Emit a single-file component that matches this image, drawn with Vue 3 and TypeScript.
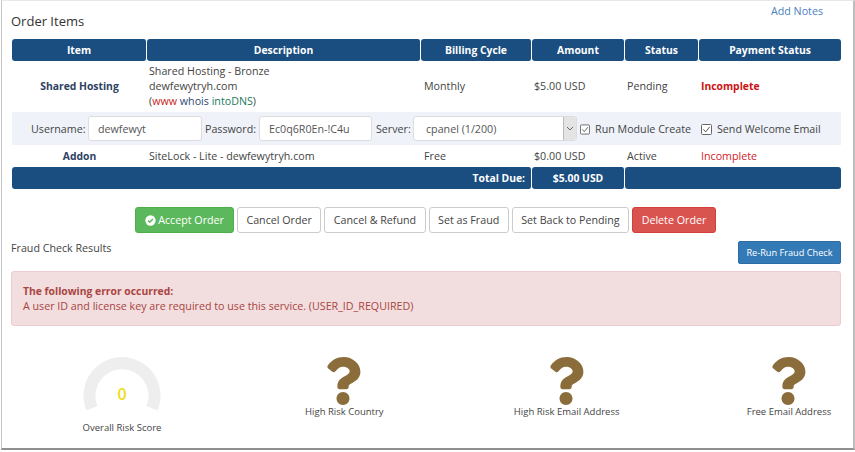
<script setup lang="ts">
const metrics = ['High Risk Country', 'High Risk Email Address', 'Free Email Address']
const qPath = 'M202.021 0C122.202 0 70.503 32.703 29.914 91.026c-7.363 10.58-5.093 25.086 5.178 32.874l43.138 32.709c10.373 7.865 25.132 6.026 33.253-4.148 25.049-31.381 43.63-49.449 82.757-49.449 30.764 0 68.816 19.799 68.816 49.631 0 22.552-18.617 34.134-48.993 51.164-35.423 19.86-82.299 44.576-82.299 106.405V320c0 13.255 10.745 24 24 24h72.471c13.255 0 24-10.745 24-24v-5.773c0-42.86 125.268-44.645 125.268-160.627C377.504 66.256 286.902 0 202.021 0zM192 373.459c-38.196 0-69.271 31.075-69.271 69.271 0 38.195 31.075 69.27 69.271 69.27s69.271-31.075 69.271-69.271-31.075-69.27-69.271-69.27z'
</script>

<template>
  <div class="frame">
    <div class="top">
      <h2 class="title">Order Items</h2>
      <a class="notes">Add Notes</a>
    </div>

    <table class="items">
      <colgroup>
        <col class="c1" /><col class="c2" /><col class="c3" /><col class="c4" /><col class="c5" /><col class="c6" />
      </colgroup>
      <thead>
        <tr>
          <th>Item</th><th>Description</th><th>Billing Cycle</th><th>Amount</th><th>Status</th><th>Payment Status</th>
        </tr>
      </thead>
      <tbody>
        <tr class="r1">
          <td class="item">Shared Hosting</td>
          <td>Shared Hosting - Bronze<br />dewfewytryh.com<br />(<span class="www">www</span> <span class="whois">whois</span> <span class="dns">intoDNS</span>)</td>
          <td class="cycle">Monthly</td>
          <td>$5.00 USD</td>
          <td>Pending</td>
          <td class="bad strong">Incomplete</td>
        </tr>
        <tr class="form-row">
          <td colspan="6">
            <div class="form">
              <label class="lbl l-user">Username:</label>
              <input class="field f-user" value="dewfewyt" readonly />
              <label class="lbl l-pass">Password:</label>
              <input class="field f-pass" value="Ec0q6R0En-!C4u" readonly />
              <label class="lbl l-server">Server:</label>
              <div class="select">
                <span class="select-text">cpanel (1/200)</span>
                <span class="select-btn">
                  <svg width="8" height="5" viewBox="0 0 8 5"><path d="M1 1l3 3 3-3" fill="none" stroke="#666" stroke-width="1" /></svg>
                </span>
              </div>
              <span class="check c-run">
                <svg width="11" height="11" viewBox="0 0 11 11"><rect x=".5" y=".5" width="10" height="10" rx="1" fill="#fff" stroke="#666" /><path d="M2.4 5.4l2.3 2.5 3.9-5" fill="none" stroke="#555" stroke-width="1" /></svg>
                Run Module Create
              </span>
              <span class="check c-mail">
                <svg width="11" height="11" viewBox="0 0 11 11"><rect x=".5" y=".5" width="10" height="10" rx="1" fill="#fff" stroke="#666" /><path d="M2.4 5.4l2.3 2.5 3.9-5" fill="none" stroke="#555" stroke-width="1" /></svg>
                Send Welcome Email
              </span>
            </div>
          </td>
        </tr>
        <tr class="r3">
          <td class="item">Addon</td>
          <td>SiteLock - Lite - dewfewytryh.com</td>
          <td class="cycle">Free</td>
          <td>$0.00 USD</td>
          <td>Active</td>
          <td class="bad">Incomplete</td>
        </tr>
      </tbody>
      <tfoot>
        <tr>
          <th colspan="3" class="due">Total Due:</th>
          <th>$5.00 USD</th>
          <th colspan="2"></th>
        </tr>
      </tfoot>
    </table>

    <div class="actions">
      <button class="btn green">
        <svg width="11" height="11" viewBox="0 0 12 12"><circle cx="6" cy="6" r="5.6" fill="#fff" /><path d="M3.4 6.1l1.8 1.8 3.4-3.5" fill="none" stroke="#5cb85c" stroke-width="1.6" /></svg>
        Accept Order
      </button>
      <button class="btn">Cancel Order</button>
      <button class="btn">Cancel &amp; Refund</button>
      <button class="btn">Set as Fraud</button>
      <button class="btn">Set Back to Pending</button>
      <button class="btn red">Delete Order</button>
    </div>

    <div class="fraud-head">
      <span class="fraud-title">Fraud Check Results</span>
      <button class="rerun">Re-Run Fraud Check</button>
    </div>

    <div class="alert">
      <strong>The following error occurred:</strong><br />
      A user ID and license key are required to use this service. (USER_ID_REQUIRED)
    </div>

    <div class="metrics">
      <div class="metric">
        <div class="gauge">
          <svg width="78" height="56" viewBox="0 0 78 56">
            <path d="M3.5 53.5A38.5 38.5 0 1 1 74.5 53.5L63.4 49.1A26.5 26.5 0 1 0 14.6 49.1Z" fill="#eeeeee" />
          </svg>
          <span class="score">0</span>
        </div>
        <div class="m-label m-score">Overall Risk Score</div>
      </div>
      <div v-for="m in metrics" :key="m" class="metric">
        <svg class="q" width="34" height="48" viewBox="27 0 351 512"><path :d="qPath" fill="#8a6d3b" /></svg>
        <div class="m-label">{{ m }}</div>
      </div>
    </div>
  </div>
</template>

<style>
html, body { margin: 0; background: #fff; }
</style>

<style scoped>
.frame {
  box-sizing: border-box;
  width: 854px;
  height: 450px;
  margin-left: 1px;
  padding: 0 12px 0 9px;
  border-left: 1px solid #c4c4c4;
  border-right: 2px solid #bdbdbd;
  border-bottom: 2px solid #8f8f8f;
  border-top: 1px solid #e8e8e8;
  font-family: "Open Sans", sans-serif;
  font-size: 10.7px;
  line-height: 15px;
  color: #444;
  overflow: hidden;
}
.top { display: flex; justify-content: space-between; height: 38px; }
.title { margin: 12px 0 0; font-size: 13px; line-height: 16px; font-weight: 400; color: #333; }
.notes { margin: 3px 18px 0 0; color: #4a80bd; }

.items { width: 829px; margin-left: 1px; table-layout: fixed; border-collapse: separate; border-spacing: 0; }
.c1 { width: 135px; } .c2 { width: 274px; } .c3 { width: 111px; } .c4 { width: 93px; } .c5 { width: 74px; } .c6 { width: 142px; }
.items th {
  height: 22px; padding: 0 2px; background: #1a4d80; color: #fff;
  font-size: 10.35px; font-weight: 700; text-align: center; border-radius: 3px;
  border-right: 1px solid #fff;
}
.items th:last-child { border-right: 0; }
.items td { padding: 0 2px 1px; vertical-align: middle; }
.items thead th, .items tfoot th { box-sizing: border-box; }
.r1 td { height: 51px; box-sizing: border-box; }
.items .r3 td { height: 22px; box-sizing: border-box; padding-bottom: 0; }
.items td.cycle { padding-left: 3px; }
.items .item { text-align: center; font-size: 10.35px; font-weight: 700; color: #2d4263; }
.www { color: #cc2222; } .whois { color: #2d4a70; } .dns { color: #1a7a60; }
.bad { color: #d2232a; }
.items .strong { font-size: 10.35px; font-weight: 700; color: #cc1111; }
.items .due { text-align: right; padding-right: 6px; }

.items .form-row td { background: #eff2f9; padding: 0; height: 33px; }
.form { display: flex; align-items: center; height: 33px; }
.lbl { flex: none; padding-top: 2px; }
.l-user { width: 54px; margin-left: 19px; }
.field {
  box-sizing: border-box; height: 25px; padding: 0 9px; border: 1px solid #ddd; border-radius: 3px;
  background: #fff; font: inherit; color: #555; outline: none;
}
.f-user { width: 114px; margin-left: 3px; }
.l-pass { width: 50px; margin-left: 3px; }
.f-pass { width: 113px; margin-left: 4px; }
.l-server { width: 34px; margin-left: 4px; }
.select {
  box-sizing: border-box; display: flex; width: 164px; height: 25px; margin-left: 3px;
  border: 1px solid #ddd; border-radius: 3px; background: #fff; color: #555;
}
.select-text { flex: 1; padding-left: 12px; line-height: 24px; }
.select-btn {
  width: 12px; display: flex; align-items: center; justify-content: center;
  background: #e4e4e4; border-left: 1px solid #bbb; border-radius: 0 2px 2px 0;
}
.check { display: flex; align-items: center; gap: 5px; flex: none; white-space: nowrap; padding-top: 2px; }
.c-run { margin-left: 3px; width: 111px; }
.c-mail { margin-left: 10px; }

.actions { display: flex; justify-content: center; gap: 3px; margin-top: 18px; padding-right: 1px; }
.btn {
  box-sizing: border-box; height: 26px; padding: 0 8.5px; border: 1px solid #ccc; border-radius: 3px;
  background: #fff; color: #444; font: inherit; display: flex; align-items: center; gap: 2px;
}
.green { background: #5cb85c; border-color: #4cae4c; color: #fff; padding: 0 9px; }
.red { background: #d9534f; border-color: #d43f3a; color: #fff; }

.fraud-head { display: flex; justify-content: space-between; align-items: flex-start; margin-top: 8px; height: 30px; width: 830px; }
.fraud-title { margin-top: 0; }
.rerun {
  box-sizing: border-box; width: 103px; height: 23px; padding: 0 0 1px; border: 1px solid #2e6da4; border-radius: 2px;
  background: #337ab7; color: #fff; font: inherit; font-size: 9.2px;
}
.alert {
  box-sizing: border-box; width: 830px; height: 55px; padding: 12px 11px 10px; background: #f2dede;
  border: 1px solid #ebccd1; border-radius: 3px; color: #a94442;
}
.alert strong { font-size: 10.35px; }
.metrics { display: flex; justify-content: space-between; width: 767px; margin: 31px 0 0 61px; }
.metric { width: 100px; display: flex; flex-direction: column; align-items: center; }
.gauge { position: relative; width: 78px; height: 56px; }
.gauge svg, .q { display: block; }
.score { position: absolute; left: 0; right: 0; top: 27px; text-align: center; color: #eedc1a; font-size: 16px; line-height: 20px; font-weight: 600; }
.m-label { font-size: 9.5px; line-height: 13px; color: #444; white-space: nowrap; margin-top: 0; }
.m-score { margin-top: 8px; }
</style>
